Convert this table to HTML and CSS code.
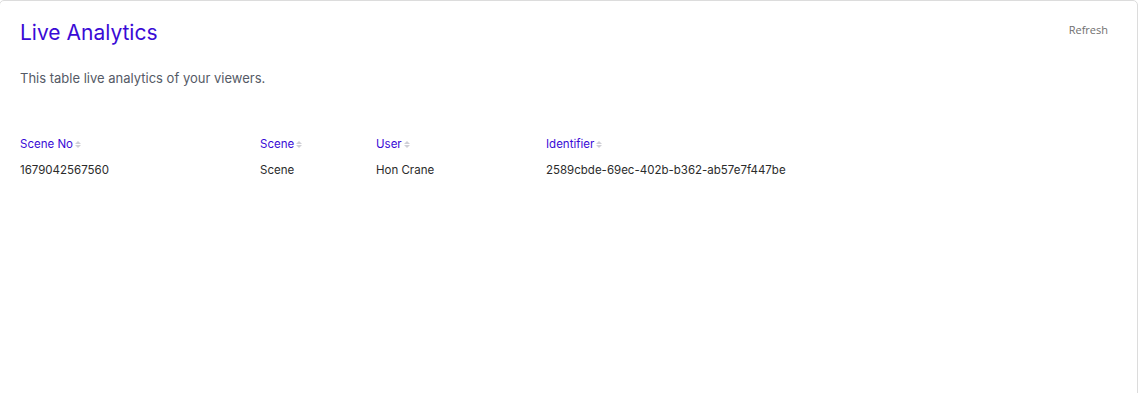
FILE: index.html
```html
<!DOCTYPE html>
<html>
<head>
<meta charset="utf-8">
<link rel="stylesheet" href="styles.css">
</head>
<body>
<div class="card">
  <div class="card-head">
    <h1 class="title">Live Analytics</h1>
    <button class="refresh">Refresh</button>
  </div>
  <p class="desc">This table live analytics of your viewers.</p>
  <table class="tbl">
    <thead>
      <tr>
        <th class="c1">Scene No<span class="sort"><i class="up"></i><i class="down"></i></span></th>
        <th class="c2">Scene<span class="sort"><i class="up"></i><i class="down"></i></span></th>
        <th class="c3">User<span class="sort"><i class="up"></i><i class="down"></i></span></th>
        <th class="c4">Identifier<span class="sort"><i class="up"></i><i class="down"></i></span></th>
      </tr>
    </thead>
    <tbody>
      <tr>
        <td>1679042567560</td>
        <td>Scene</td>
        <td>Hon Crane</td>
        <td>2589cbde-69ec-402b-b362-ab57e7f447be</td>
      </tr>
    </tbody>
  </table>
</div>
</body>
</html>
```
FILE: styles.css
```css
html, body {
  margin: 0;
  padding: 0;
  background: #fff;
}
body {
  font-family: Inter, "Noto Sans", sans-serif;
}
.card {
  box-sizing: border-box;
  width: 1139px;
  height: 400px;
  margin-left: -1px;
  border: 1px solid #dcdcdc;
  border-radius: 5px;
  background: #fff;
  padding: 17px 20px 0 20px;
}
.card-head {
  display: flex;
  justify-content: space-between;
  align-items: flex-start;
}
.title {
  margin: 0;
  font-size: 21px;
  font-weight: 400;
  color: #3a0bd6;
  line-height: 30px;
}
.refresh {
  border: 0;
  background: none;
  padding: 0;
  margin-top: 4px;
  margin-right: 9px;
  font-family: "Open Sans", sans-serif;
  font-size: 11px;
  color: #6f6f6f;
  cursor: pointer;
}
.desc {
  margin: 20px 0 0 0;
  font-size: 13px;
  color: #555a66;
  line-height: 20px;
}
.tbl {
  margin-top: 48px;
  border-collapse: collapse;
  font-size: 11.5px;
}
.tbl th {
  text-align: left;
  font-weight: 400;
  color: #3a0bd6;
  padding: 0 0 6px 0;
  line-height: 16px;
}
.tbl td {
  color: #2b2b2b;
  padding: 4px 0 0 0;
  line-height: 16px;
}
.c1 { width: 240px; }
.c2 { width: 116px; }
.c3 { width: 170px; }
.sort {
  display: inline-flex;
  flex-direction: column;
  gap: 1px;
  margin-left: 2px;
  vertical-align: middle;
}
.sort i {
  width: 0;
  height: 0;
  border-left: 3px solid transparent;
  border-right: 3px solid transparent;
}
.sort .up { border-bottom: 3px solid #cfcfd6; }
.sort .down { border-top: 3px solid #cfcfd6; }
```
